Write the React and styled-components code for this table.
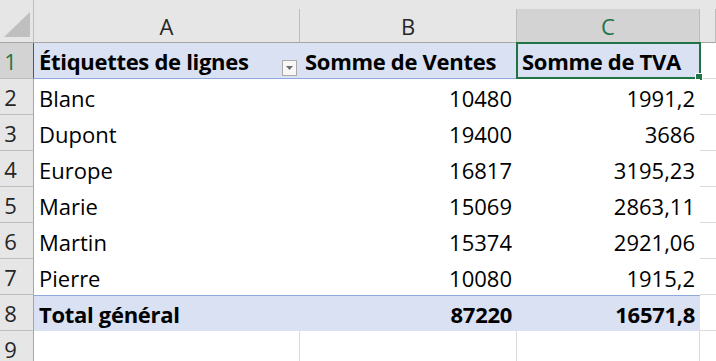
import React from "react";
import styled, { createGlobalStyle } from "styled-components";

const GlobalStyle = createGlobalStyle`
  html, body {
    margin: 0;
    padding: 0;
    background: #ffffff;
  }
  body {
    font-family: "Open Sans", "Noto Sans", sans-serif;
  }
`;

const Sheet = styled.div`
  display: grid;
  grid-template-columns: 34px 266px 217px 183px 1fr;
  grid-template-rows: 43px repeat(9, 36px);
  width: 716px;
  height: 361px;
  overflow: hidden;
  background: #ffffff;
`;

const Corner = styled.div`
  background: #e6e6e6;
  display: flex;
  align-items: flex-end;
  justify-content: flex-end;
  padding: 0 3px 5px 0;
  border-right: 1px solid #bdbdbd;
  border-bottom: 1px solid #a6a6a6;
  box-sizing: border-box;
`;

const ColHead = styled.div`
  background: #e6e6e6;
  display: flex;
  align-items: flex-end;
  border-bottom: 1px solid ${(p) => (p.$active ? "#217346" : "#a6a6a6")};
  box-sizing: border-box;
`;

const ColLabel = styled.div`
  flex: 1;
  height: 33px;
  display: flex;
  align-items: center;
  justify-content: center;
  font-size: 22px;
  color: ${(p) => (p.$active ? "#217346" : "#262626")};
  background: ${(p) => (p.$active ? "#d3d3d3" : "#e6e6e6")};
  border-right: 1px solid #bdbdbd;
`;

const RowHead = styled.div`
  background: ${(p) => (p.$active ? "#d3d3d3" : "#e6e6e6")};
  color: ${(p) => (p.$active ? "#217346" : "#262626")};
  border-right: 1px solid ${(p) => (p.$active ? "#217346" : "#a6a6a6")};
  border-bottom: 1px solid #bdbdbd;
  box-sizing: border-box;
  display: flex;
  align-items: center;
  justify-content: center;
  padding-right: 12px;
  font-size: 22px;
`;

const Cell = styled.div`
  position: relative;
  box-sizing: border-box;
  display: flex;
  align-items: center;
  justify-content: ${(p) => (p.$num ? "flex-end" : "flex-start")};
  padding: 1px 5px 0 5px;
  font-size: 22px;
  font-weight: ${(p) => (p.$bold ? 700 : 400)};
  letter-spacing: ${(p) => (p.$bold ? "-0.3px" : "0")};
  color: #000000;
  white-space: nowrap;
  background: ${(p) => (p.$band ? "#d9e1f2" : "#ffffff")};
  border-top: ${(p) => (p.$top ? "1px solid #8ea9db" : "none")};
  border-bottom: ${(p) => (p.$bottom ? "1px solid #8ea9db" : "none")};
`;

const Blank = styled.div`
  box-sizing: border-box;
  border-right: ${(p) => (p.$noRight ? "none" : "1px solid #dadada")};
  border-bottom: 1px solid #dadada;
`;

const FilterButton = styled.span`
  position: absolute;
  right: 3px;
  top: 17px;
  width: 15px;
  height: 16px;
  box-sizing: border-box;
  border: 1px solid #ababab;
  background: #f7f7f7;
  display: flex;
  align-items: center;
  justify-content: center;
`;

const Selection = styled.span`
  position: absolute;
  inset: -1px -1px -1px -1px;
  border: 2px solid #217346;
  pointer-events: none;
`;

const Handle = styled.span`
  position: absolute;
  right: -4px;
  bottom: -4px;
  width: 6px;
  height: 6px;
  background: #217346;
  border: 1px solid #ffffff;
`;

const rows = [
  ["Blanc", "10480", "1991,2"],
  ["Dupont", "19400", "3686"],
  ["Europe", "16817", "3195,23"],
  ["Marie", "15069", "2863,11"],
  ["Martin", "15374", "2921,06"],
  ["Pierre", "10080", "1915,2"],
];

export default function App() {
  return (
    <>
      <GlobalStyle />
      <Sheet>
        <Corner>
          <svg width="26" height="25" viewBox="0 0 26 25">
            <polygon points="26,0 26,25 0,25" fill="#bfbfbf" />
          </svg>
        </Corner>
        <ColHead><ColLabel>A</ColLabel></ColHead>
        <ColHead><ColLabel>B</ColLabel></ColHead>
        <ColHead $active><ColLabel $active>C</ColLabel></ColHead>
        <ColHead><ColLabel /></ColHead>

        <RowHead $active>1</RowHead>
        <Cell $band $bottom $bold>
          Étiquettes de lignes
          <FilterButton>
            <svg width="7" height="4" viewBox="0 0 7 4">
              <polygon points="0,0 7,0 3.5,4" fill="#6d6d6d" />
            </svg>
          </FilterButton>
        </Cell>
        <Cell $band $bottom $bold>Somme de Ventes</Cell>
        <Cell $band $bottom $bold>
          Somme de TVA
          <Selection><Handle /></Selection>
        </Cell>
        <Blank $noRight />

        {rows.map(([name, sales, vat], i) => (
          <React.Fragment key={name}>
            <RowHead>{i + 2}</RowHead>
            <Cell>{name}</Cell>
            <Cell $num>{sales}</Cell>
            <Cell $num>{vat}</Cell>
            <Blank $noRight />
          </React.Fragment>
        ))}

        <RowHead>8</RowHead>
        <Cell $band $top $bold>Total général</Cell>
        <Cell $band $top $bold $num>87220</Cell>
        <Cell $band $top $bold $num>16571,8</Cell>
        <Blank $noRight />

        <RowHead>9</RowHead>
        <Blank />
        <Blank />
        <Blank />
        <Blank $noRight />
      </Sheet>
    </>
  );
}
